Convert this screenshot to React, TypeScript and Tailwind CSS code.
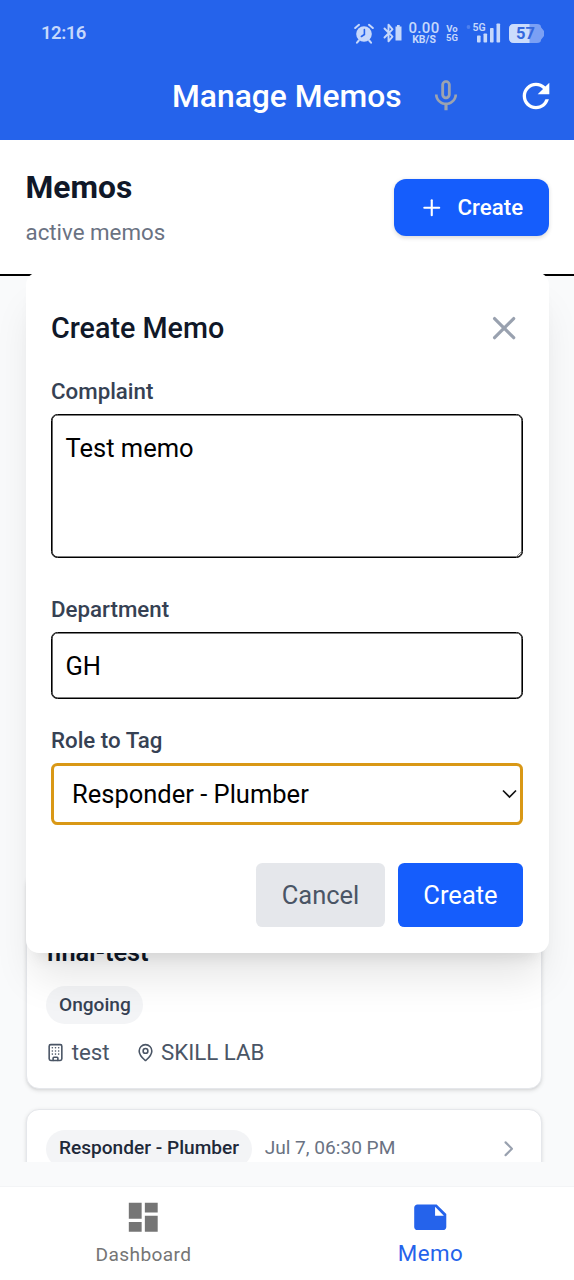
import type { ReactNode } from 'react';
import { Building, ChevronRight, MapPin, Plus, X } from 'lucide-react';
import { MdDashboard, MdMicNone, MdNote, MdRefresh } from 'react-icons/md';

function StatusBar() {
  return (
    <div className="flex h-[64px] items-center justify-between pt-[2px] pr-[29px] pl-[41px] text-[#c6d8fb]">
      <span className="pt-px text-[18.500px] font-semibold tracking-[-0.500px]">12:16</span>
      <div className="flex items-center">
        <svg width="20" height="21" viewBox="0 0 20 21" fill="none">
          <circle cx="10" cy="11" r="7.8" fill="currentColor" />
          <path d="M1.2 5 5 1.8M18.8 5 15 1.8M4.8 17.5 3 19.7M15.2 17.5l1.8 2.2" stroke="currentColor" strokeWidth="2" strokeLinecap="round" />
          <path d="M10.4 6.5v5l-3 2" stroke="#2563eb" strokeWidth="1.6" strokeLinecap="round" />
        </svg>
        <svg className="ml-[9px]" width="20" height="20" viewBox="0 0 20 20" fill="none">
          <path d="M1.500 5.500 9.500 13.700 5.500 18.300V1.700L9.500 6.300l-8 8.200" stroke="currentColor" strokeWidth="1.900" strokeLinejoin="round" strokeLinecap="round" />
          <path d="M12.500 3.500H14V2h2.700v1.500h1.800V17.500h-6z" fill="currentColor" />
        </svg>
        <div className="ml-[5px] flex w-[32px] flex-col items-center pt-[2px]">
          <span className="text-[15px] leading-[11px] font-medium tracking-[0.300px]">0.00</span>
          <span className="text-[10.500px] leading-[11px] font-bold">KB/S</span>
        </div>
        <div className="ml-[6px] flex w-[12px] flex-col items-center text-[9.500px] leading-[9px] font-bold">
          <span>Vo</span>
          <span>5G</span>
        </div>
        <svg className="ml-[7px]" width="36" height="22" viewBox="0 0 36 22" fill="currentColor">
          <circle cx="3.500" cy="5" r="1.900" opacity="0.25" />
          <text x="7.500" y="9" fontSize="10.500" fontWeight="600" fontFamily="Roboto">5G</text>
          <rect x="12" y="13.500" width="3.600" height="7" rx="0.800" />
          <rect x="18.500" y="11.500" width="3.600" height="9" rx="0.800" />
          <rect x="25" y="6" width="3.600" height="14.500" rx="0.800" />
          <rect x="31.500" y="1.500" width="3.600" height="19" rx="0.800" />
        </svg>
        <svg className="ml-[8px]" width="36" height="19" viewBox="0 0 36 19">
          <path d="M5 0h23q4 0 4 3.200l3 3.800v5l-3 3.800q0 3.200-4 3.200H5q-5 0-5-5V5q0-5 5-5z" fill="#7ba0f4" />
          <path d="M5 0h15.500v19H5q-5 0-5-5V5q0-5 5-5z" fill="#cbdcfc" />
          <text x="16.500" y="15.300" textAnchor="middle" fontSize="16.500" fontWeight="700" fontFamily="Roboto" fill="#3568dd">57</text>
        </svg>
      </div>
    </div>
  );
}

function AppHeader() {
  return (
    <header className="h-[140px] shrink-0 bg-[#2563eb]">
      <StatusBar />
      <div className="flex h-[64px] items-center pr-[18px] pl-[172px] text-white">
        <h1 className="w-[232px] pt-[2px] text-[31.800px] font-medium whitespace-nowrap">Manage Memos</h1>
        <MdMicNone size={38} className="ml-[23.300px] text-[#9ca3af]" />
        <MdRefresh size={40} className="ml-auto" />
      </div>
    </header>
  );
}

function Field({ label, className, children }: { label: string; className: string; children: ReactNode }) {
  return (
    <div className={`flex flex-col ${className}`}>
      <span className="text-[22.300px] leading-[32px] font-medium text-[#364153]">{label}</span>
      {children}
    </div>
  );
}

function CreateMemoDialog() {
  return (
    <section className="absolute top-[-4px] left-[25.500px] flex h-[681px] w-[523px] flex-col rounded-[13px] bg-white px-[25.500px] pt-[33px] pb-[26px] shadow-[0_32px_40px_-8px_rgba(0,0,0,0.1),0_13px_16px_-10px_rgba(0,0,0,0.1)]">
      <div className="flex h-[46px] items-center justify-between">
        <h3 className="pt-px text-[28.700px] font-medium text-[#101828]">Create Memo</h3>
        <X size={38.250} className="text-[#99a1af]" />
      </div>
      <Field label="Complaint" className="mt-[24px]">
        <div className="mt-[7px] flex h-[144px] items-start justify-between rounded-[6.400px] border border-black pt-[14px] pl-[13.500px] text-[25.500px] leading-[38px] text-black shadow-[inset_0_0_0_0.6px_#000]">
          Test memo
          <svg className="mr-px mb-px self-end" width="4" height="4" viewBox="0 0 4 4">
            <path d="M0 4 4 0M2.500 4 4 2.500" stroke="#666" strokeWidth="0.700" />
          </svg>
        </div>
      </Field>
      <Field label="Department" className="mt-[35px]">
        <div className="mt-[7px] flex h-[67px] items-center rounded-[6.400px] border border-black pt-[1.500px] pl-[13.500px] text-[25.500px] text-black shadow-[inset_0_0_0_0.6px_#000]">GH</div>
      </Field>
      <Field label="Role to Tag" className="mt-[25px]">
        <div className="mt-[7px] flex h-[62px] items-center justify-between rounded-[6.400px] border-3 border-[#d99816] pr-[3px] pl-[18px] text-[25.500px] text-black">
          Responder - Plumber
          <svg width="15" height="10" viewBox="0 0 15 10" fill="none">
            <path d="m1 1.500 6.500 6.500L14 1.500" stroke="#111" strokeWidth="1.700" />
          </svg>
        </div>
      </Field>
      <div className="mt-auto flex justify-end gap-[13px] text-[25.500px]">
        <button className="h-[64px] w-[129px] rounded-[6.400px] bg-[#e5e7eb] pt-px text-[#4a5565]">Cancel</button>
        <button className="h-[64px] w-[125px] rounded-[6.400px] bg-[#155dfc] pt-px text-white">Create</button>
      </div>
    </section>
  );
}

function MemoList() {
  const card = 'w-[516px] shrink-0 rounded-[13px] border-[1.600px] border-[#e5e7eb] bg-white px-[19.300px] shadow-[0_1.600px_4px_rgba(0,0,0,0.1),0_1.600px_3px_-1.600px_rgba(0,0,0,0.1)]';
  return (
    <div className="flex h-full flex-col gap-[20px] overflow-hidden pt-[597px] pl-[26px]">
      <article className={`${card} h-[215.500px] pt-[60px]`}>
        <h3 className="text-[25.300px] leading-[38px] font-semibold text-[#101828]">final-test</h3>
        <div className="mt-[14px] flex">
          <span className="flex h-[38px] items-center rounded-full bg-[#f3f4f6] px-[12.700px] text-[19.100px] font-medium text-[#364153]">Ongoing</span>
        </div>
        <div className="mt-[12px] flex items-center text-[22.300px] leading-[32px] text-[#4a5565]">
          <Building size={19} />
          <span className="ml-[6.400px]">test</span>
          <MapPin size={19} className="ml-[26px]" />
          <span className="ml-[6.400px]">SKILL LAB</span>
        </div>
      </article>
      <article className={`${card} h-[220px] pt-[20px]`}>
        <div className="flex items-center">
          <span className="flex h-[38px] items-center rounded-full bg-[#f3f4f6] px-[12.700px] text-[19.100px] font-medium text-[#1e2939]">Responder - Plumber</span>
          <span className="ml-[13px] text-[19.100px] text-[#6a7282]">Jul 7, 06:30 PM</span>
          <ChevronRight size={25.500} className="ml-auto text-[#99a1af]" />
        </div>
      </article>
    </div>
  );
}

export default function App() {
  return (
    <div className="flex h-[1280px] w-[574px] flex-col overflow-hidden bg-[#f9fafb] font-['Roboto',sans-serif]">
      <AppHeader />
      <div className="flex h-[136px] shrink-0 justify-between border-b-2 border-black bg-white pr-[25.500px] pl-[25.500px]">
        <div className="pt-[27px]">
          <h2 className="text-[31.800px] leading-[40px] font-bold text-[#101828]">Memos</h2>
          <p className="mt-[9px] text-[22.300px] leading-[32px] text-[#6a7282]">active memos</p>
        </div>
        <button className="mt-[39px] flex h-[57px] w-[154.500px] items-center justify-center gap-[12.700px] rounded-[12px] bg-[#155dfc] text-[22.300px] font-medium text-white shadow-[0_1.600px_4px_rgba(0,0,0,0.15)]">
          <Plus size={25.500} />
          Create
        </button>
      </div>
      <main className="relative h-[886px] shrink-0">
        <MemoList />
        <CreateMemoDialog />
      </main>
      <nav className="mt-[24px] grid h-[94px] shrink-0 grid-cols-2 border-t border-[#f3f4f6] bg-white">
        <div className="flex flex-col items-center pt-[11px] text-[#757575]">
          <MdDashboard size={38.500} />
          <span className="mt-[4.500px] text-[19.100px] leading-[28px] tracking-[0.400px]">Dashboard</span>
        </div>
        <div className="flex flex-col items-center pt-[11px] text-[#2563eb]">
          <MdNote size={38.500} />
          <span className="mt-[2.500px] text-[22.300px] leading-[28px] tracking-[0.500px]">Memo</span>
        </div>
      </nav>
    </div>
  );
}
